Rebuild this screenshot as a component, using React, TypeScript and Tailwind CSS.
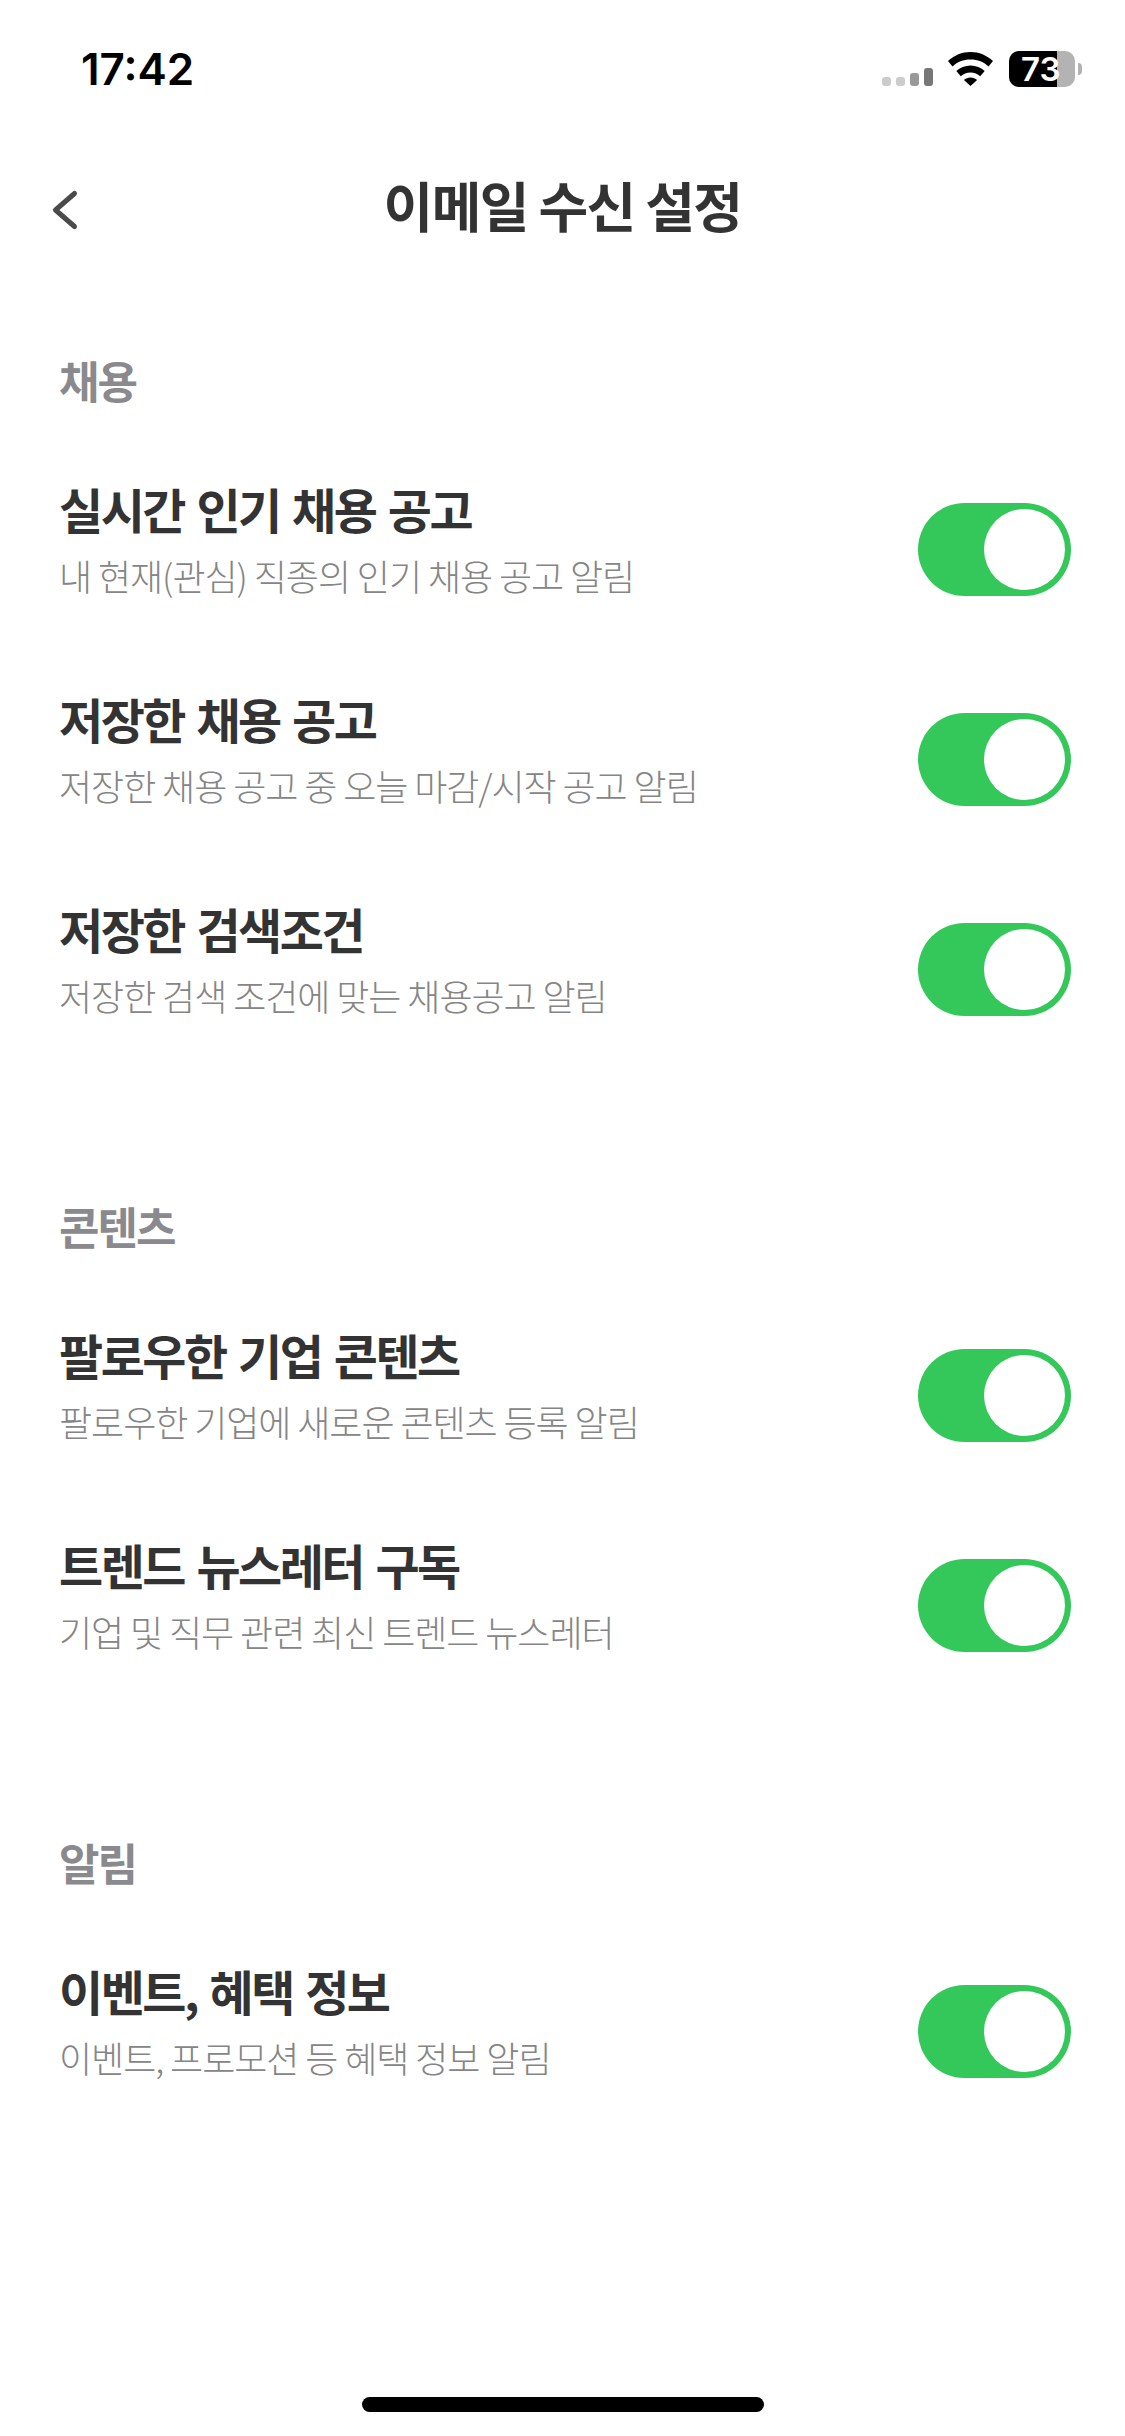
const sans = "font-['Noto_Sans_CJK_KR','Noto_Sans',sans-serif]";

const sections = [
  {
    title: "채용",
    rows: [
      { title: "실시간 인기 채용 공고", desc: "내 현재(관심) 직종의 인기 채용 공고 알림" },
      { title: "저장한 채용 공고", desc: "저장한 채용 공고 중 오늘 마감/시작 공고 알림" },
      { title: "저장한 검색조건", desc: "저장한 검색 조건에 맞는 채용공고 알림" },
    ],
  },
  {
    title: "콘텐츠",
    rows: [
      { title: "팔로우한 기업 콘텐츠", desc: "팔로우한 기업에 새로운 콘텐츠 등록 알림" },
      { title: "트렌드 뉴스레터 구독", desc: "기업 및 직무 관련 최신 트렌드 뉴스레터" },
    ],
  },
  {
    title: "알림",
    rows: [{ title: "이벤트, 혜택 정보", desc: "이벤트, 프로모션 등 혜택 정보 알림" }],
  },
];

const StatusBar = () => (
  <div className="flex h-[110px] shrink-0 items-start justify-between pl-[81px] pr-[43px] pt-[51px]">
    <span className="font-['Inter',sans-serif] text-[44px] leading-[36px] font-semibold text-black">17:42</span>
    <div className="flex items-center">
      <div className="flex items-end gap-[5px] pt-[16px]">
        <div className="h-[9px] w-[9px] rounded-[3px] bg-[#cccccc]" />
        <div className="h-[9px] w-[9px] rounded-[3px] bg-[#cccccc]" />
        <div className="h-[13px] w-[9px] rounded-[3px] bg-[#999999]" />
        <div className="h-[18px] w-[9px] rounded-[3px] bg-[#777777]" />
      </div>
      <svg className="ml-[15px]" width="45" height="34" viewBox="0 0 45 34">
        <path d="M22.500 0C14 0 6.200 3.300 0 9l4.500 5.500C9 10 15.400 7.500 22.500 7.500S36 10 40.500 14.500L45 9C38.800 3.300 31 0 22.500 0Z" fill="#000" />
        <path d="M22.500 13.500c-5.500 0-10.500 2.100-14.200 5.600l4.500 5.200c2.500-2.300 5.900-3.700 9.700-3.700s7.200 1.400 9.700 3.700l4.500-5.200C33 15.600 28 13.500 22.500 13.500Z" fill="#000" />
        <path d="M22.500 25.500c-2.600 0-4.900.9-6.600 2.500l6.600 6 6.600-6c-1.700-1.600-4-2.500-6.600-2.500Z" fill="#000" />
      </svg>
      <div className="relative ml-[16px] flex h-[36px] w-[66px] rounded-[10px] bg-[#b3b3b3]">
        <div className="h-full w-[48px] rounded-l-[10px] bg-black" />
        <span className="absolute left-[12px] top-0 font-['Inter',sans-serif] text-[33px] leading-[36px] font-semibold text-white">73</span>
      </div>
      <div className="ml-[3px] h-[12px] w-[4px] rounded-r-full bg-[#b3b3b3]" />
    </div>
  </div>
);

const Header = () => (
  <div className="relative flex h-[245px] shrink-0 items-start justify-center pt-[65px]">
    <svg className="absolute left-[51px] top-[79px]" width="28" height="42" viewBox="0 0 28 42" fill="none">
      <path d="M23.500 4.500 L4.500 21 L23.500 37.500" stroke="#4a4a4a" strokeWidth="5" strokeLinecap="round" strokeLinejoin="round" />
    </svg>
    <h1 className="text-[54px] leading-[60px] font-bold tracking-[-1.6px] text-[#333333]">이메일 수신 설정</h1>
  </div>
);

const Toggle = () => (
  <div className="flex h-[93px] w-[153px] shrink-0 items-center justify-end rounded-full bg-[#34c759] pr-[6px]">
    <div className="h-[81px] w-[81px] rounded-full bg-white" />
  </div>
);

const Row = ({ title, desc }: { title: string; desc: string }) => (
  <div className="flex h-[210px] items-center justify-between pl-[59px] pr-[54px]">
    <div className="mb-[20px] flex flex-col">
      <div className="text-[48px] leading-[60px] font-bold tracking-[-2.5px] [word-spacing:4px] text-[#333333]">{title}</div>
      <div className="mt-[12px] text-[36px] leading-[50px] font-light tracking-[-1.05px] text-[#858585]">{desc}</div>
    </div>
    <Toggle />
  </div>
);

export default function App() {
  return (
    <div className={`flex min-h-[2436px] w-[1125px] flex-col bg-white ${sans}`}>
      <StatusBar />
      <Header />
      {sections.map((s) => (
        <section key={s.title} className="mb-[127px] flex flex-col">
          <h2 className="pl-[59px] text-[44px] leading-[50px] font-bold tracking-[-2px] text-[#8a8a8e]">{s.title}</h2>
          <div className="mt-[39px] flex flex-col">
            {s.rows.map((r) => (
              <Row key={r.title} title={r.title} desc={r.desc} />
            ))}
          </div>
        </section>
      ))}
      <div className="mt-auto flex justify-center pb-[24px]">
        <div className="h-[15px] w-[402px] rounded-full bg-black" />
      </div>
    </div>
  );
}
